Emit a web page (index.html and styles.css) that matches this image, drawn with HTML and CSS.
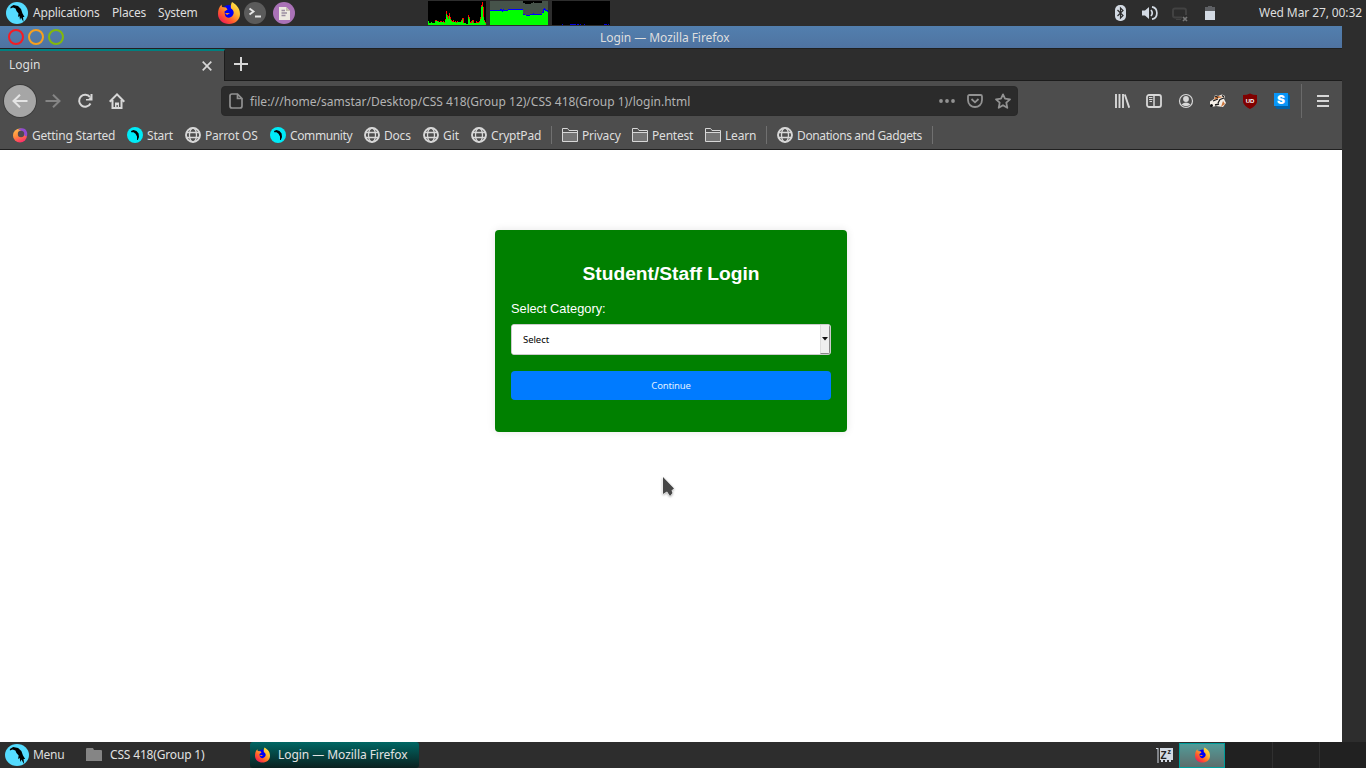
FILE: index.html
```html
<!DOCTYPE html>
<html lang="en">
<head>
<meta charset="utf-8">
<title>Login</title>
<link rel="stylesheet" href="styles.css">
</head>
<body>
<svg class="defs" width="0" height="0">
  <defs>
    <linearGradient id="fxg" x1="1" y1="0" x2="0.2" y2="1"><stop offset="0" stop-color="#fff44f"/><stop offset=".4" stop-color="#ffb52f"/><stop offset=".7" stop-color="#ff5e2a"/><stop offset="1" stop-color="#f0145a"/></linearGradient>
    <linearGradient id="gsg" x1="0.2" y1="0" x2="0.6" y2="1"><stop offset="0" stop-color="#ffbd4f"/><stop offset=".5" stop-color="#ff8a3c"/><stop offset="1" stop-color="#ff2a6d"/></linearGradient>
  </defs>
  <symbol id="parrot" viewBox="0 0 22 22" preserveAspectRatio="none"><circle cx="11" cy="11" r="11" fill="#55dcff"/><path d="M4.500 5L7.500 3L12 4L15 7L16.500 11.500L18.500 15L17 15L17.500 20L15 15.500L14 18L13.500 14L12 15L12.500 11.500L10.500 9L9.500 6.500L7 5.500L4.500 6.500Z" fill="#000"/></symbol>
  <symbol id="parrot-sm" viewBox="0 0 16 16"><circle cx="8" cy="8" r="8" fill="#00ebf7"/><path d="M4 4L6.500 3L9.500 4L11.600 6.500L12 10L10.800 13L10 13L10 9.500L8.500 6.800L6.500 5.300L4.300 5.300Z" fill="#000"/></symbol>
  <symbol id="firefox" viewBox="0 0 22 22"><circle cx="11" cy="11" r="8" fill="#0000f5"/><path d="M14 0C17 2 22 5 22 12C22 18 17 22 11 22C5 22 0 18 0 12C0 8 1 5 3.500 2.500L4 5L8 5.500L9.500 7.500L6.500 9.500L7 13C8 16.500 13 16.500 15 13C16.500 10.500 15.500 8 13 6.500C12.500 4 13 2 14 0Z" fill="url(#fxg)"/><path d="M7 11L12 11L9 13Z" fill="#ff8a20"/></symbol>
  <symbol id="globe" viewBox="0 0 16 16"><g fill="none" stroke="#d7d7d7"><circle cx="8" cy="8" r="7" stroke-width="1.900"/><ellipse cx="8" cy="8" rx="3.500" ry="7" stroke-width="1.300"/><path d="M1.500 5.500H14.500M1.500 10.500H14.500" stroke-width="1.300"/></g></symbol>
  <symbol id="folder" viewBox="0 0 16 16"><path d="M.5 14.500V1.500H5.500L7 3.500H15.500V14.500Z" fill="#747474" stroke="#d7d7d7"/><path d="M.5 5.500H15.500" stroke="#d7d7d7"/><path d="M1 2H5.300L6.800 4H15V5H1Z" fill="#505050"/></symbol>
</svg>

<header class="panel">
  <nav class="panel-menus">
    <svg class="i22"><use href="#parrot"/></svg>
    <span class="m-app">Applications</span><span class="m-places">Places</span><span class="m-system">System</span>
  </nav>
  <div class="launchers">
    <svg class="i22"><use href="#firefox"/></svg>
    <svg class="i22" viewBox="0 0 22 22"><circle cx="11" cy="11" r="11" fill="#5b5b5b"/><path d="M5.500 6.500L9.500 9.500L5.500 12.500M11 14.500H17" fill="none" stroke="#e6e6e6" stroke-width="1.900"/></svg>
    <svg class="i22 notes" viewBox="0 0 22 22"><circle cx="11" cy="11" r="11" fill="#aa72b7"/><path d="M6 5H13L17 9V18H6Z" fill="#ece9e0"/><path d="M13 5V9H17Z" fill="#c3bfae"/><path d="M8.500 8.500H12M8.500 11H14M8.500 13.500H12.500" stroke="#998da0" stroke-width="1.300"/></svg>
  </div>
  <div class="monitors">
    <svg viewBox="0 0 58 24" preserveAspectRatio="none" shape-rendering="crispEdges"><path fill="#000" d="M0 0H58V24H0Z"/><path fill="#f00" d="M0 24V20H1V22H3V21H4V22H7V19H9V20H11V21H12V20H14V21H15V20H16V21H17V18H18V10H19V14H20V15H21V12H22V16H23V19H24V20H25V19H26V21H27V20H28V21H29V20H30V21H33V19H34V17H36V22H38V23H40V14H41V16H42V21H43V20H44V19H46V22H48V20H49V21H51V20H52V16H53V4H54V1H55V6H56V19H57V21H58V24Z"/><path fill="#0f0" d="M0 24V20H1V22H3V21H4V22H7V20H10V21H16V22H17V19H18V13H19V16H20V18H21V15H22V18H23V20H24V21H28V22H29V21H33V20H34V18H35V22H38V23H40V16H41V18H42V22H44V20H45V22H51V21H52V18H53V6H54V5H55V16H56V20H57V22H58V24Z"/></svg>
    <svg viewBox="0 0 58 24" preserveAspectRatio="none" shape-rendering="crispEdges"><path fill="#46534a" d="M0 0H58V24H0Z"/><path fill="#000" d="M33 0H52V2H44V1H43V2H41V3H35V2H33Z"/><path fill="#00f" d="M0 24V9H10V8H12V9H13V8H14V9H18V8H33V13H35V14H40V13H43V12H44V13H52V11H53V8H54V7H55V8H56V9H58V24Z"/><path fill="#0f0" d="M0 24V10H12V11H13V10H18V9H33V14H36V15H40V14H52V12H54V9H55V10H57V11H58V24Z"/></svg>
    <svg viewBox="0 0 58 24" preserveAspectRatio="none" shape-rendering="crispEdges"><path fill="#000" d="M0 0H58V24H0Z"/><path fill="#0000e0" d="M10 23H11V24H10ZM18 23H24V24H18ZM25 23H27V24H25ZM28 23H29V24H28ZM32 23H33V24H32ZM52 23H55V24H52ZM56 23H57V24H56Z"/></svg>
  </div>
  <div class="tray">
    <svg width="11" height="16" viewBox="0 0 11 16"><rect width="11" height="16" rx="5" fill="#d3dae3"/><path d="M2.500 5L8 10.500L5.500 13V3L8 5.500L2.500 11" fill="none" stroke="#2d2d2d" stroke-width="1.200"/></svg>
    <svg class="t-vol" width="16" height="14" viewBox="0 0 16 14"><path d="M0 4.500H3L7 1V13L3 9.500H0Z" fill="#d3dae3"/><path d="M9 4Q11.500 7 9 10M10 .8C16.500 2 16.500 12 10 13.200" fill="none" stroke="#d3dae3" stroke-width="1.700"/></svg>
    <svg class="t-net" width="17" height="16" viewBox="0 0 17 16"><path d="M10 10.500H3Q1 10.500 1 8.500V3.500Q1 1.500 3 1.500H12Q14 1.500 14 3.500V8" fill="none" stroke="#424242" stroke-width="2"/><path d="M4 12.500H9" stroke="#424242"/><path d="M11 10L15 14M15 10L11 14" stroke="#777" stroke-width="1.700"/></svg>
    <svg class="t-bat" width="10" height="14" viewBox="0 0 10 14"><path d="M3 0H7V1H10V5H0V1H3Z" fill="#5e6064"/><path d="M0 5H10V14H0Z" fill="#d3dae3"/></svg>
    <time class="clock">Wed Mar 27, 00:32</time>
  </div>
</header>

<main class="window">
  <div class="titlebar"><div class="lights"><i class="red"></i><i class="orange"></i><i class="lime"></i></div><span class="window-title">Login — Mozilla Firefox</span></div>
  <div class="tabs">
    <div class="tab"><span class="tab-label">Login</span><svg width="10" height="10" viewBox="0 0 10 10"><path d="M.7 .7L9.300 9.300M9.300 .7L.7 9.300" stroke="#d7d7d7" stroke-width="1.700"/></svg></div>
    <svg class="plus" width="14" height="14" viewBox="0 0 14 14"><path d="M7 0V14M0 7H14" stroke="#d7d7d7" stroke-width="2"/></svg>
  </div>
  <div class="toolbar">
    <div class="nav">
      <span class="back"><svg width="16" height="14" viewBox="0 0 16 14"><path d="M15.500 7H1.500M8 .8L1.500 7L8 13.200" fill="none" stroke="#e4e4e4" stroke-width="2"/></svg></span>
      <svg width="16" height="14" viewBox="0 0 16 14"><path d="M.5 7H14.500M8 .8L14.500 7L8 13.200" fill="none" stroke="#858585" stroke-width="2"/></svg>
      <svg width="16" height="16" viewBox="0 0 16 16"><path d="M13 4.200A6 6 0 1 0 13.500 10.500" fill="none" stroke="#d7d7d7" stroke-width="2"/><path d="M15.500 1V7.500H9V6H11.500L13.500 4V1Z" fill="#d7d7d7"/></svg>
      <svg width="16" height="16" viewBox="0 0 16 16"><path d="M.7 8.700L8 1.400L15.300 8.700M3.500 7V15H12.500V7" fill="none" stroke="#d7d7d7" stroke-width="2"/><path d="M6 15V9.500H10V15H8.800V12H7.500V15Z" fill="#d7d7d7"/></svg>
    </div>
    <div class="urlbar">
      <svg width="14" height="16" viewBox="0 0 14 16"><path d="M3 1H8.500L13 5.500V13Q13 15 11 15H3Q1 15 1 13V3Q1 1 3 1ZM8.500 1V5.500H13" fill="none" stroke="#919191" stroke-width="1.700"/></svg>
      <span class="url">file:///home/samstar/Desktop/CSS 418(Group 12)/CSS 418(Group 1)/login.html</span>
      <svg class="dots" width="16" height="4" viewBox="0 0 16 4"><g fill="#929292"><circle cx="2" cy="2" r="1.900"/><circle cx="8" cy="2" r="1.900"/><circle cx="14" cy="2" r="1.900"/></g></svg>
      <svg width="16" height="14" viewBox="0 0 16 14"><path d="M2.500 1H13.500Q15 1 15 2.500V6C15 15.300 1 15.300 1 6V2.500Q1 1 2.500 1ZM4.500 5L8 8.300L11.500 5" fill="none" stroke="#929292" stroke-width="1.800"/></svg>
      <svg width="16" height="16" viewBox="0 0 16 16"><path d="M8 1.400L10 5.700L15 6.300L11.300 9.700L12.300 14.800L8 12.200L3.700 14.800L4.700 9.700L1 6.300L6 5.700Z" fill="none" stroke="#929292" stroke-width="1.800" stroke-linejoin="round"/></svg>
    </div>
    <div class="tools">
      <svg width="16" height="14" viewBox="0 0 16 14"><path d="M2 0V14M5.500 0V14M9 0V14M10.800 .5L15.200 13.700" stroke="#d7d7d7" stroke-width="1.900"/></svg>
      <svg width="16" height="14" viewBox="0 0 16 14"><rect x="1" y="1" width="14" height="12" rx="2" fill="none" stroke="#d7d7d7" stroke-width="1.800"/><path d="M8 1V13" stroke="#d7d7d7" stroke-width="1.500"/><path d="M3 3.500H6.500M3 5.500H6.500M3.500 7.500H6" stroke="#d7d7d7"/></svg>
      <svg width="16" height="16" viewBox="0 0 16 16"><circle cx="8" cy="8" r="6.500" fill="none" stroke="#d7d7d7" stroke-width="1.200"/><circle cx="8" cy="6" r="2.900" fill="#d7d7d7"/><path d="M3.500 11.500Q8 7.500 12.500 11.500Q8 15 3.500 11.500Z" fill="#d7d7d7"/></svg>
      <svg width="16" height="16" viewBox="0 0 16 16"><path d="M0 8.500L4 6L5 2L8 3L12 1.500L15 3L14 6L16 10L13 14L6 13L2 14L0 12Z" fill="#f5efe8"/><path d="M5 4L8 3L13 4L9 5L4 7Z" fill="#d47a3d"/><path d="M5 3L8 4.500M12 2.500L14 4M3 8L8 6M8 10L10 6.500L14 5M5 12L9 11" fill="none" stroke="#1a1a1a" stroke-width="1.300"/><circle cx="1.500" cy="12.500" r="1.500" fill="#111"/><path d="M13 8L15 11L11 14Z" fill="#cc763d"/></svg>
      <svg width="16" height="16" viewBox="0 0 16 16"><path d="M8 .5Q11 2 15 2V9Q14 13 8 16Q2 13 1 9V2Q5 2 8 .5Z" fill="#800000"/><text x="8" y="9.500" text-anchor="middle" class="ud">UD</text></svg>
      <svg width="16" height="16" viewBox="0 0 16 16"><path d="M14 1L16 3V16H3L1 14Z" fill="#0060a8"/><path d="M0 0H14V13H0Z" fill="#0996f8"/><text x="7" y="11" text-anchor="middle" class="s-glyph">S</text></svg>
    </div>
    <div class="app-menu"><svg width="12" height="12" viewBox="0 0 12 12"><path d="M0 1H12M0 6H12M0 11H12" stroke="#d7d7d7" stroke-width="2"/></svg></div>
  </div>
  <div class="bookmarks">
    <a class="snug"><svg><circle cx="8" cy="8.500" r="7" fill="url(#gsg)"/><path d="M6 3Q9 0 13 2Q16 5 15 9Q12.500 10 12 7Q10 3 6 3Z" fill="#914bd0"/><circle cx="9" cy="7" r="3.200" fill="#504a50"/></svg><span>Getting Started</span></a>
    <a class="snug"><svg><use href="#parrot-sm"/></svg><span>Start</span></a>
    <a class="snug"><svg><use href="#globe"/></svg><span>Parrot OS</span></a>
    <a class="tight"><svg><use href="#parrot-sm"/></svg><span>Community</span></a>
    <a class="snug"><svg><use href="#globe"/></svg><span>Docs</span></a>
    <a><svg><use href="#globe"/></svg><span>Git</span></a>
    <a class="snug"><svg><use href="#globe"/></svg><span>CryptPad</span></a>
    <i class="sep"></i>
    <a class="snug"><svg><use href="#folder"/></svg><span>Privacy</span></a>
    <a class="snug"><svg><use href="#folder"/></svg><span>Pentest</span></a>
    <a class="snug"><svg><use href="#folder"/></svg><span>Learn</span></a>
    <i class="sep"></i>
    <a class="tight"><svg><use href="#globe"/></svg><span>Donations and Gadgets</span></a>
    <i class="sep"></i>
  </div>
  <section class="page">
    <form class="card">
      <h2>Student/Staff Login</h2>
      <label for="category">Select Category:</label>
      <div class="select-box"><select id="category"><option>Select</option></select><span class="arrow"><svg width="6" height="4" viewBox="0 0 6 4"><path d="M0 0H6L3 3.500Z" fill="#111"/></svg></span></div>
      <button type="button">Continue</button>
    </form>
  </section>
</main>

<footer class="taskbar">
  <div class="start"><svg width="24" height="22"><use href="#parrot"/></svg><span>Menu</span></div>
  <div class="task folder-task"><svg width="16" height="14" viewBox="0 0 16 14"><path d="M0 1Q0 0 1 0H7L8 2H15Q16 2 16 3V13H0Z" fill="#858585"/></svg><span>CSS 418(Group 1)</span></div>
  <div class="task active-task"><svg width="15" height="16"><use href="#firefox"/></svg><span>Login — Mozilla Firefox</span></div>
  <div class="taskbar-end">
    <svg class="zz" width="18" height="16" viewBox="0 0 18 16"><path d="M0 1H2.500V16H1.500V2H0ZM4 1H17V13H15V15H13V13H11V15H9V13H7V15H5V13H4Z" fill="#d3dae3"/><text x="4.500" y="11.500" class="z-big">Z</text><text x="11.500" y="7" class="z-small">z</text></svg>
    <div class="workspace current"><svg width="15" height="16"><use href="#firefox"/></svg></div>
    <div class="workspace"></div><div class="workspace"></div><div class="workspace"></div>
  </div>
</footer>

<svg class="cursor" width="18" height="26" viewBox="0 0 18 26"><path d="M3 3V20L7 17.500L10 22L12.500 19L11.500 16.500L14 14.500Z" fill="#474747" stroke="#fff" paint-order="stroke"/></svg>
</body>
</html>
```
FILE: styles.css
```css
* { box-sizing: border-box; }
body { margin: 0; width: 1366px; height: 768px; overflow: hidden; display: flex; flex-direction: column; background: #2d2d2d; color: #dedede; font: 12px/16px "Noto Sans", sans-serif; white-space: nowrap; }
svg { display: block; flex: none; }
.defs { position: absolute; }
.i22 { width: 22px; height: 22px; }

.panel { height: 26px; flex: none; display: flex; align-items: center; }
.panel-menus { width: 218px; padding-left: 6px; display: flex; align-items: center; letter-spacing: -.2px; }
.panel-menus span { flex: none; }
.m-app { margin-left: 5px; width: 79px; }
.m-places { width: 46px; }
.launchers { width: 210px; display: flex; gap: 4px; }
.notes { margin-left: 3px; }
.monitors { width: 182px; display: flex; gap: 4px; }
.monitors svg { width: 58px; height: 24px; }
.tray { flex: 1; display: flex; align-items: center; padding-left: 505px; }
.t-vol { margin-left: 16px; }
.t-net { margin-left: 14px; margin-top: 3px; }
.t-bat { margin-left: 16px; }
.clock { margin-left: auto; padding-right: 4px; letter-spacing: -.1px; }

.window { width: 1342px; height: 716px; flex: none; background: #fff; display: flex; flex-direction: column; }
.titlebar { height: 22px; flex: none; display: flex; align-items: center; background: linear-gradient(#527fae, #4f73a1); }
.window-title { padding-top: 1px; letter-spacing: -.05px; }
.lights { display: flex; gap: 4px; padding-left: 8px; width: 600px; }
.lights i { width: 16px; height: 16px; border: 2px solid; border-radius: 50%; }
.red { color: #f41c24; }
.orange { color: #f6a01f; }
.lime { color: #83b80b; }
.tabs { height: 33px; flex: none; display: flex; align-items: center; background: #2d2d2d; border-top: 1px solid #202020; border-bottom: 1px solid #1c1c1c; }
.tab { width: 225px; height: 32px; margin-bottom: -1px; align-self: flex-start; background: #4d4d4d; border-top: 2px solid #008080; border-right: 1px solid #1c1c1c; display: flex; align-items: center; justify-content: space-between; padding: 0 12px 2px 9px; }
.tab svg { margin-top: 1px; }
.plus { margin: 0 0 2px 9px; }
.toolbar { height: 40px; flex: none; display: flex; align-items: center; background: #4d4d4d; }
.nav { width: 221px; display: flex; align-items: center; gap: 16px; padding-left: 4px; }
.back { width: 32px; height: 32px; margin-right: -7px; border-radius: 50%; background: #a6a6a6; box-shadow: 0 0 0 1px #3d3d3d; display: grid; place-items: center; }
.urlbar { width: 797px; height: 30px; background: #2b2b2b; border: 1px solid #292929; border-radius: 4px; display: flex; align-items: center; gap: 12px; padding: 0 6px 0 7px; }
.url { color: #b3b3b3; margin-left: -5px; flex: 1; padding-top: 2px; letter-spacing: .01px; }
.tools { display: flex; align-items: center; gap: 16px; padding-left: 96px; width: 283px; }
.app-menu { height: 34px; border-left: 1px solid #6a6a6a; padding-left: 15px; display: flex; align-items: center; }
.ud { font: bold 6px "Liberation Sans", sans-serif; fill: #fff; }
.s-glyph { font: 900 12px Inter, sans-serif; fill: #fff; }
.bookmarks { height: 29px; flex: none; background: #4d4d4d; border-bottom: 1px solid #202020; padding-left: 12px; display: grid; grid-template-columns: 115px 58px 85px 94px 59px 48px 80px 11px 70px 73px 61px 11px 155px 1px; align-items: center; }
.bookmarks a { display: flex; align-items: center; gap: 4px; }
.bookmarks span { padding-top: 2px; }
.bookmarks svg { width: 16px; height: 16px; }
.snug { letter-spacing: -.2px; }
.tight { letter-spacing: -.38px; }
.sep { width: 1px; height: 18px; background: #707070; }

.page { flex: 1; padding: 80px 0 0 495px; background: #fff; }
.card { width: 352px; height: 202px; padding: 32px 16px; background: #008000; border-radius: 4px; box-shadow: 0 0 8px rgba(0,0,0,.1); color: #fff; font-family: "Liberation Sans", sans-serif; display: flex; flex-direction: column; }
.card h2 { margin: 0 0 16px; font-size: 19.2px; line-height: 23px; text-align: center; }
.card label { font-size: 12.8px; line-height: 15px; }
.select-box { height: 31px; margin-top: 8px; border: 1px solid #ccc; border-radius: 3px; background: #fff; display: flex; overflow: hidden; }
.select-box select { appearance: none; flex: 1; border: 0; outline: 0; background: #fff; color: #000; padding: 0 11px; font: 9.5px "Noto Sans", sans-serif; letter-spacing: -.05px; }
.arrow { width: 10px; background: #efefef; border-right: 1px solid #888; border-bottom: 1px solid #888; border-left: 1px solid #ddd; display: grid; place-items: center; }
.card button { height: 29px; margin-top: 16px; border: 0; border-radius: 4px; background: #007bff; color: #e1efff; font: 9.5px "Noto Sans", sans-serif; letter-spacing: -.15px; }

.taskbar { height: 26px; flex: none; display: flex; align-items: center; background: #2d2d2d; }
.start { width: 86px; padding-left: 5px; display: flex; align-items: center; gap: 4px; letter-spacing: -.3px; }
.task { display: flex; align-items: center; gap: 8px; height: 26px; color: #e2e2e2; }
.folder-task { width: 164px; letter-spacing: -.17px; }
.active-task { width: 169px; padding-left: 5px; background: linear-gradient(#006764, #0b201f); border-radius: 3px; letter-spacing: -.05px; }
.taskbar-end { margin-left: auto; display: flex; align-items: center; }
.zz { margin-right: 5px; }
.workspace { width: 47px; height: 26px; background: #212121; border-right: 1px solid #303030; }
.workspace:last-child { border-right: 0; }
.workspace.current { width: 46px; height: 25px; border: 1px solid #009d9a; background: linear-gradient(#529b98, #5d6d6c); display: grid; place-items: center; }
.workspace.current + .workspace { width: 48px; }
.workspace:last-child { width: 46px; }
.z-big { font: bold 10px "Liberation Sans", sans-serif; fill: #222; }
.z-small { font: bold 7px "Liberation Sans", sans-serif; fill: #222; }
.cursor { position: absolute; left: 660px; top: 474px; filter: drop-shadow(0 1px 1px rgba(0,0,0,.3)); }
```
